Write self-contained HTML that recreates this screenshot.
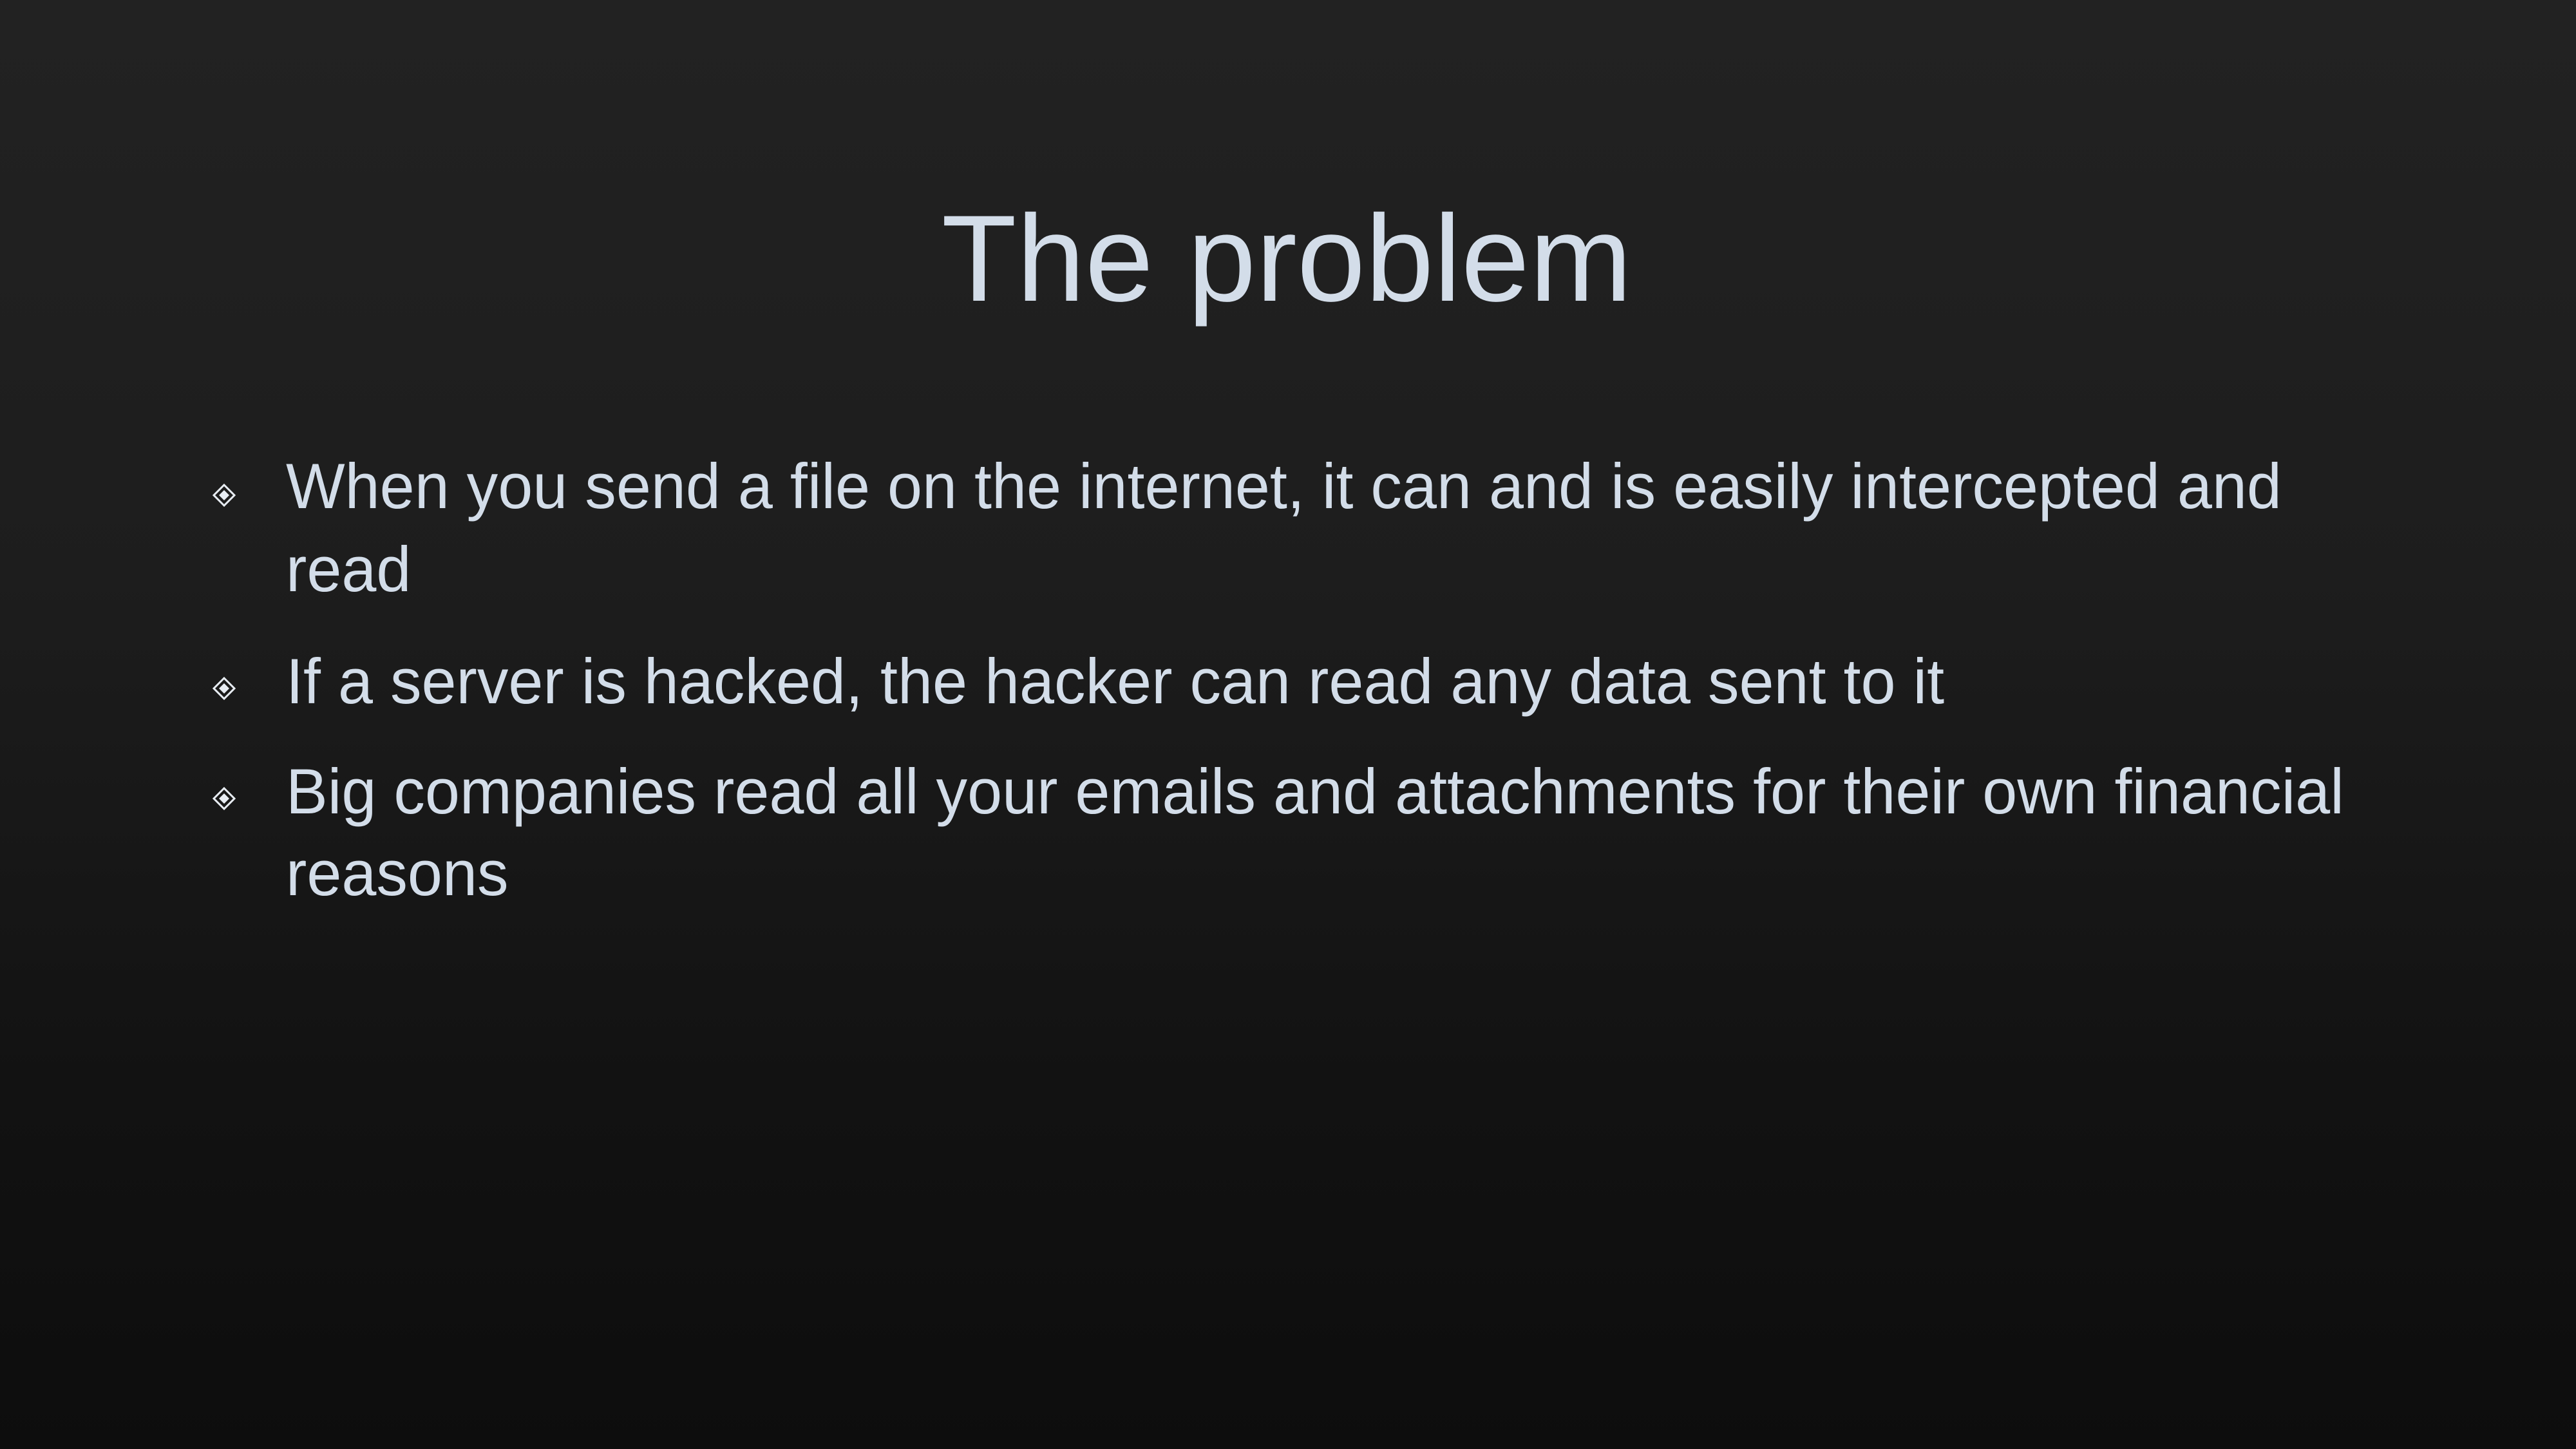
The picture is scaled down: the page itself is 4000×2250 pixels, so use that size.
<!DOCTYPE html>
<html><head><meta charset="utf-8"><style>
html,body{margin:0;padding:0}
body{width:4000px;height:2250px;overflow:hidden;position:relative;
background:linear-gradient(180deg,#222222 0%,#1d1d1d 40%,#121212 75%,#0d0d0d 100%);
font-family:"Liberation Sans",sans-serif;color:#d3dde9}
.t{position:absolute;white-space:nowrap;line-height:1}
.title{font-size:191px;left:0;width:3996px;text-align:center;top:306px}
.b{font-size:99px;left:444px;transform:scaleX(0.981);transform-origin:0 0}
.d{position:absolute;width:36px;height:36px}
</style></head><body>
<div class="t title">The problem</div>
<div class="t b" style="top:705px">When you send a file on the internet, it can and is easily intercepted and</div>
<div class="t b" style="top:834px">read</div>
<div class="t b" style="top:1008px">If a server is hacked, the hacker can read any data sent to it</div>
<div class="t b" style="top:1179px">Big companies read all your emails and attachments for their own financial</div>
<div class="t b" style="top:1306px">reasons</div>
<svg class="d" style="left:330px;top:751px" viewBox="0 0 36 36"><path d="M18 2 L34 18 L18 34 L2 18 Z" fill="none" stroke="#e8edf3" stroke-width="3"/><path d="M18 10 L26 18 L18 26 L10 18 Z" fill="#e8edf3"/></svg>
<svg class="d" style="left:330px;top:1051px" viewBox="0 0 36 36"><path d="M18 2 L34 18 L18 34 L2 18 Z" fill="none" stroke="#e8edf3" stroke-width="3"/><path d="M18 10 L26 18 L18 26 L10 18 Z" fill="#e8edf3"/></svg>
<svg class="d" style="left:330px;top:1222px" viewBox="0 0 36 36"><path d="M18 2 L34 18 L18 34 L2 18 Z" fill="none" stroke="#e8edf3" stroke-width="3"/><path d="M18 10 L26 18 L18 26 L10 18 Z" fill="#e8edf3"/></svg>
</body></html>
